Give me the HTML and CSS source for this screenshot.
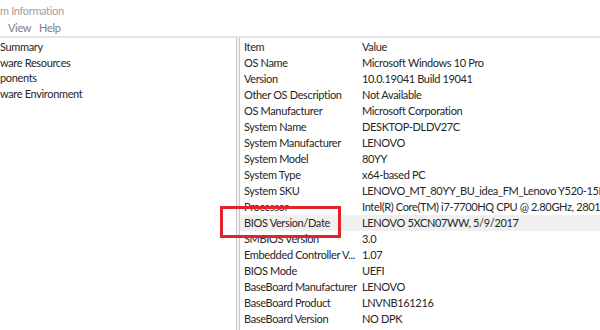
FILE: index.html
```html
<!DOCTYPE html>
<html lang="en">
<head>
    <meta charset="UTF-8">
    <title>System Information</title>
    <link rel="stylesheet" href="styles.css">
</head>
<body>
<div class="window">
    <div class="titlebar">m Information</div>
    <div class="menubar">
        <span>View</span>
        <span>Help</span>
    </div>
    <div class="main">
        <!-- 左侧树 -->
        <ul class="tree">
            <li>Summary</li>
            <li>ware Resources</li>
            <li>ponents</li>
            <li>ware Environment</li>
        </ul>
        <!-- 右侧列表 -->
        <div class="list">
            <div class="row head"><span>Item</span><span>Value</span></div>
            <div class="row"><span>OS Name</span><span>Microsoft Windows 10 Pro</span></div>
            <div class="row"><span>Version</span><span>10.0.19041 Build 19041</span></div>
            <div class="row"><span>Other OS Description</span><span>Not Available</span></div>
            <div class="row"><span>OS Manufacturer</span><span>Microsoft Corporation</span></div>
            <div class="row"><span>System Name</span><span>DESKTOP-DLDV27C</span></div>
            <div class="row"><span>System Manufacturer</span><span>LENOVO</span></div>
            <div class="row"><span>System Model</span><span>80YY</span></div>
            <div class="row"><span>System Type</span><span>x64-based PC</span></div>
            <div class="row"><span>System SKU</span><span>LENOVO_MT_80YY_BU_idea_FM_Lenovo Y520-15IKBM</span></div>
            <div class="row"><span>Processor</span><span>Intel(R) Core(TM) i7-7700HQ CPU @ 2.80GHz, 2801 Mhz</span></div>
            <div class="row selected"><span>BIOS Version/Date</span><span>LENOVO 5XCN07WW, 5/9/2017</span></div>
            <div class="row"><span>SMBIOS Version</span><span>3.0</span></div>
            <div class="row"><span>Embedded Controller V...</span><span>1.07</span></div>
            <div class="row"><span>BIOS Mode</span><span>UEFI</span></div>
            <div class="row"><span>BaseBoard Manufacturer</span><span>LENOVO</span></div>
            <div class="row"><span>BaseBoard Product</span><span>LNVNB161216</span></div>
            <div class="row"><span>BaseBoard Version</span><span>NO DPK</span></div>
        </div>
        <!-- 红色标注框 -->
        <div class="highlight-box"></div>
    </div>
</div>
</body>
</html>
```

FILE: styles.css
```css
/* 整体窗口 */
body {
    margin: 0;
    background-color: #fff;
    font-family: Lato, "Noto Sans", sans-serif;
    font-size: 11px;
    letter-spacing: -0.35px;
    color: #262626;
    overflow: hidden;
}

.window {
    width: 600px;
    height: 330px;
    overflow: hidden;
}

/* 标题栏 */
.titlebar {
    height: 20px;
    line-height: 21px;
    color: #a0a0a0;
}

/* 菜单栏 */
.menubar {
    height: 16px;
    line-height: 16px;
    color: #808080;
    padding-left: 8px;
    border-bottom: 2px solid #e4e4e4;
    display: flex;
    gap: 8px;
}

/* 主体区域 */
.main {
    position: relative;
    display: flex;
    gap: 2px;
    height: 300px;
    background-color: #f3f3f3;
}

/* 左侧树 */
.tree {
    list-style: none;
    margin: 0;
    padding: 1px 0 0 0;
    width: 236px;
    background-color: #fff;
    border-right: 1px solid #c8c8c8;
}

.tree li {
    height: 15.5px;
    line-height: 15.5px;
    white-space: nowrap;
}

/* 右侧列表 */
.list {
    flex: 1;
    background-color: #fff;
    border-left: 1px solid #c8c8c8;
    padding-top: 1px;
    overflow: hidden;
}

.row {
    display: grid;
    grid-template-columns: 118px 1fr;
    height: 16px;
    line-height: 16px;
    white-space: nowrap;
}

.row span {
    padding-left: 4px;
    overflow: hidden;
}

.row.selected {
    background-color: #f0f0f0;
}

/* 红色标注框 */
.highlight-box {
    position: absolute;
    left: 220px;
    top: 168px;
    width: 115px;
    height: 26px;
    border: 3px solid #e3232b;
}
```
